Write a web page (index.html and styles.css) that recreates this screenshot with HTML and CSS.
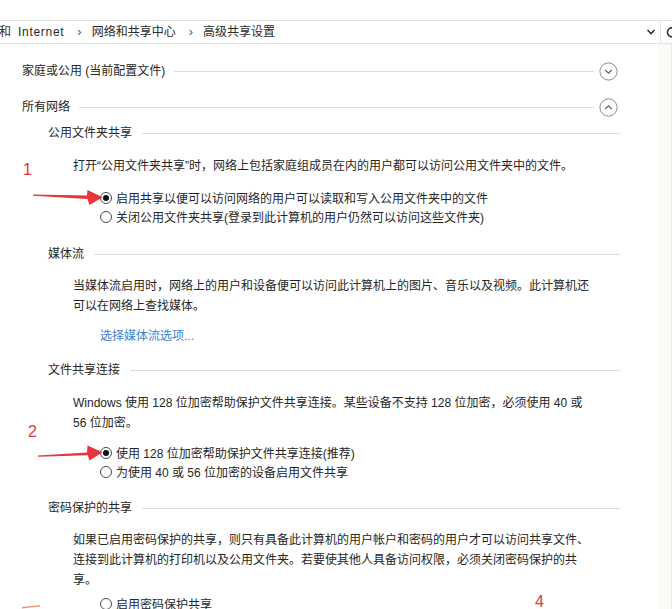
FILE: index.html
```html
<!DOCTYPE html>
<html lang="zh-CN">
<head>
<meta charset="utf-8">
<title>高级共享设置</title>
<link rel="stylesheet" href="styles.css">
</head>
<body>
<div class="window">
  <div class="topgap"></div>
  <div class="addr">
    <div class="crumbs">
      <span class="crumb">和<span class="latin">Internet</span></span>
      <span class="sep">›</span>
      <span class="crumb">网络和共享中心</span>
      <span class="sep">›</span>
      <span class="crumb">高级共享设置</span>
    </div>
    <div class="addr-tools">
      <svg class="drop" width="10" height="8" viewBox="0 0 10 8"><path d="M1.5 2 L5 5.5 L8.5 2" fill="none" stroke="#333" stroke-width="1.6"/></svg>
      <span class="divider"></span>
      <svg class="refresh" width="14" height="14" viewBox="0 0 14 14"><path d="M10.5 4.2 A4.6 4.6 0 1 0 11.6 8" fill="none" stroke="#333" stroke-width="1.6"/><path d="M8 1.6 L11.6 1.4 L11.2 5" fill="none" stroke="#333" stroke-width="1.6"/></svg>
    </div>
  </div>
  <div class="body">
    <div class="content">
      <div class="group-head first">
        <span class="label">家庭或公用 (当前配置文件)</span>
        <span class="rule"></span>
        <svg class="toggle" width="19" height="19" viewBox="0 0 19 19"><circle cx="9.5" cy="9.5" r="8.6" fill="none" stroke="#8c8c8c" stroke-width="1"/><path d="M6.2 8 L9.5 11.2 L12.8 8" fill="none" stroke="#666" stroke-width="1.3"/></svg>
      </div>
      <div class="group-head second">
        <span class="label">所有网络</span>
        <span class="rule"></span>
        <svg class="toggle" width="19" height="19" viewBox="0 0 19 19"><circle cx="9.5" cy="9.5" r="8.6" fill="none" stroke="#8c8c8c" stroke-width="1"/><path d="M6.2 11 L9.5 7.8 L12.8 11" fill="none" stroke="#666" stroke-width="1.3"/></svg>
      </div>

      <div class="sub-head s1"><span class="label">公用文件夹共享</span><span class="rule"></span></div>
      <p class="para p1">打开“公用文件夹共享”时，网络上包括家庭组成员在内的用户都可以访问公用文件夹中的文件。</p>
      <div class="radio-row r-top1"><span class="radio checked"></span><span>启用共享以便可以访问网络的用户可以读取和写入公用文件夹中的文件</span></div>
      <div class="radio-row"><span class="radio"></span><span>关闭公用文件夹共享(登录到此计算机的用户仍然可以访问这些文件夹)</span></div>

      <div class="sub-head s2"><span class="label">媒体流</span><span class="rule"></span></div>
      <p class="para p2">当媒体流启用时，网络上的用户和设备便可以访问此计算机上的图片、音乐以及视频。此计算机还<br>可以在网络上查找媒体。</p>
      <div class="link-row"><span class="link">选择媒体流选项...</span></div>

      <div class="sub-head s3"><span class="label">文件共享连接</span><span class="rule"></span></div>
      <p class="para p3">Windows 使用 128 位加密帮助保护文件共享连接。某些设备不支持 128 位加密，必须使用 40 或<br>56 位加密。</p>
      <div class="radio-row r-top2"><span class="radio checked"></span><span>使用 128 位加密帮助保护文件共享连接(推荐)</span></div>
      <div class="radio-row"><span class="radio"></span><span>为使用 40 或 56 位加密的设备启用文件共享</span></div>

      <div class="sub-head s4"><span class="label">密码保护的共享</span><span class="rule"></span></div>
      <p class="para p4">如果已启用密码保护的共享，则只有具备此计算机的用户帐户和密码的用户才可以访问共享文件、<br>连接到此计算机的打印机以及公用文件夹。若要使其他人具备访问权限，必须关闭密码保护的共<br>享。</p>
      <div class="radio-row r-top3"><span class="radio"></span><span>启用密码保护共享</span></div>
    </div>
    <div class="strip"></div>
  </div>

  <svg class="marks" width="672" height="609" viewBox="0 0 672 609">
    <polygon points="33,194.6 87,195.6 87.5,190 102.5,197.2 89.5,205 87.5,199 33,195.8" fill="#e8343a"/>
    <polygon points="38,455.6 87,452.6 87.5,445.5 102.5,452.2 89.5,460.5 87.8,455.2 38,456.8" fill="#e8343a"/>
    <polygon points="22,607 40,605 40,606.6 22,608.6" fill="#ef6a50" opacity="0.75"/>
  </svg>
  <span class="num n1">1</span>
  <span class="num n2">2</span>
  <span class="num n4">4</span>
</div>
</body>
</html>
```

FILE: styles.css
```css
html, body {
  margin: 0;
  padding: 0;
  background: #ffffff;
}

.window {
  position: relative;
  width: 672px;
  height: 609px;
  overflow: hidden;
  font-family: "Liberation Sans", "Noto Sans CJK SC", sans-serif;
  font-size: 12px;
  color: #262626;
  background: #ffffff;
}

.topgap {
  height: 20px;
}

.addr {
  box-sizing: border-box;
  height: 24px;
  border-top: 1px solid #e2e2e2;
  border-bottom: 1px solid #e2e2e2;
  display: flex;
  align-items: center;
  justify-content: space-between;
}

.crumbs {
  display: flex;
  align-items: center;
  line-height: 20px;
  color: #2a2a2a;
  margin-left: -1px;
}

.crumb {
  white-space: nowrap;
}

.latin {
  margin-left: 7px;
  letter-spacing: 0.7px;
}

.sep {
  margin: 0 10px 0 13px;
  color: #555;
  font-size: 13px;
}

.addr-tools {
  display: flex;
  align-items: center;
  height: 100%;
  margin-right: -7px;
}

.drop {
  margin-right: 4px;
}

.divider {
  width: 1px;
  height: 22px;
  background: #e6e6e6;
  margin-right: 4px;
}

.body {
  display: flex;
  height: 565px;
}

.content {
  width: 658px;
  flex: none;
}

.strip {
  flex: 1;
  background: #fbfbf6;
  border-right: 1px solid #ececec;
}

.group-head,
.sub-head {
  display: flex;
  align-items: center;
  height: 20px;
  line-height: 20px;
  white-space: nowrap;
}

.group-head {
  padding-left: 22px;
  padding-right: 40px;
}

.group-head .rule {
  margin: 0 5px 0 9px;
}

.group-head.first { margin-top: 17px; }
.group-head.second { margin-top: 16px; }

.sub-head {
  padding-left: 48px;
  padding-right: 38px;
}

.sub-head .rule {
  margin-left: 10px;
}

.rule {
  flex: 1;
  height: 1px;
  background: #dcdcdc;
}

.toggle {
  flex: none;
  display: block;
}

.s1 { margin-top: 6px; }
.s2 { margin-top: 18px; }
.s3 { margin-top: 14px; }
.s4 { margin-top: 17px; }

.para {
  margin: 0;
  padding-left: 73px;
  line-height: 20px;
  white-space: nowrap;
}

.p1 { margin-top: 13px; }
.p2 { margin-top: 12px; }
.p3 { margin-top: 13px; }
.p4 { margin-top: 12px; }

.radio-row {
  display: flex;
  align-items: center;
  gap: 4px;
  height: 19px;
  padding-left: 100px;
  white-space: nowrap;
}

.r-top1 { margin-top: 12px; }
.r-top2 { margin-top: 10px; }
.r-top3 { margin-top: 4px; }

.radio {
  box-sizing: border-box;
  width: 12px;
  height: 12px;
  border: 1px solid #4a4a4a;
  border-radius: 50%;
  background: #fff;
  display: flex;
  align-items: center;
  justify-content: center;
  flex: none;
}

.radio.checked::after {
  content: "";
  width: 6px;
  height: 6px;
  border-radius: 50%;
  background: #111;
}

.link-row {
  margin-top: 10px;
  height: 20px;
  line-height: 20px;
  padding-left: 100px;
}

.link {
  color: #3c7fd0;
}

.marks {
  position: absolute;
  left: 0;
  top: 0;
  pointer-events: none;
}

.num {
  position: absolute;
  font-family: "Liberation Sans", sans-serif;
  font-size: 16px;
  line-height: 16px;
  color: #e2363c;
}

.n1 { left: 23px; top: 162px; }
.n2 { left: 28px; top: 424px; }
.n4 { left: 535px; top: 594px; }
```
